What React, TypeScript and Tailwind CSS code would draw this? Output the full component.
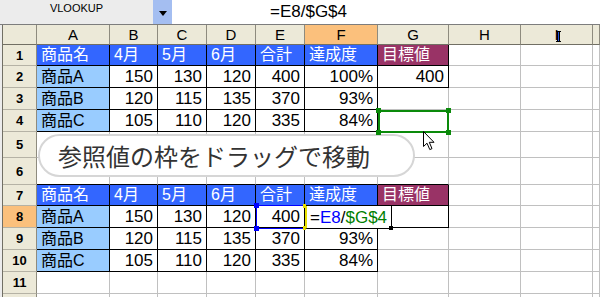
import React from "react";

const FONT = '"Liberation Sans", "Noto Sans CJK JP", sans-serif';

const letters = ["A", "B", "C", "D", "E", "F", "G", "H", "I", ""];

const headerRow = ["商品名", "4月", "5月", "6月", "合計", "達成度", "目標値"];
const data: Record<number, string[]> = {
  1: headerRow,
  2: ["商品A", "150", "130", "120", "400", "100%", "400"],
  3: ["商品B", "120", "115", "135", "370", "93%", ""],
  4: ["商品C", "105", "110", "120", "335", "84%", ""],
  7: headerRow,
  8: ["商品A", "150", "130", "120", "400", "", ""],
  9: ["商品B", "120", "115", "135", "370", "93%", ""],
  10: ["商品C", "105", "110", "120", "335", "84%", ""],
};

function inTable(r: number, c: number) {
  const tr = (r >= 1 && r <= 4) || (r >= 7 && r <= 10);
  if (tr && c >= 1 && c <= 6) return true;
  if ((r === 1 || r === 2 || r === 7 || r === 8) && c === 7) return true;
  return false;
}

function Cell({ r, c }: { r: number; c: number }) {
  const rightBlack = inTable(r, c) || inTable(r, c + 1);
  const bottomBlack = inTable(r, c) || inTable(r + 1, c);
  const row = data[r];
  const text = row && c >= 1 && c <= 7 ? row[c - 1] : "";
  const isHead = r === 1 || r === 7;
  let bg = "bg-white";
  let color = "text-black";
  let align = "justify-end pr-[4px]";
  let size = "text-[17px]";
  if (row) {
    if (isHead && c >= 1 && c <= 6) {
      bg = "bg-[#3366ff]";
      color = "text-white";
      align = "justify-start pl-[4px]";
      size = "text-[16px]";
    } else if (isHead && c === 7) {
      bg = "bg-[#993366]";
      color = "text-white";
      align = "justify-start pl-[4px]";
      size = "text-[16px]";
    } else if (c === 1) {
      bg = "bg-[#99ccff]";
      align = "justify-start pl-[4px]";
      size = "text-[16px]";
    }
  }
  return (
    <div
      className={`flex items-center overflow-hidden whitespace-nowrap leading-none border-r border-b ${
        rightBlack ? "border-r-black" : "border-r-[#c0c0c0]"
      } ${bottomBlack ? "border-b-black" : "border-b-[#c0c0c0]"} ${bg} ${color} ${align} ${size}`}
    >
      {text}
    </div>
  );
}

function Cursor() {
  return (
    <svg width="14" height="20" viewBox="0 0 14 20" className="absolute left-[423px] top-[131px]">
      <path d="M0.5 0.5 L0.5 15.5 L4 12.2 L6.8 18.6 L9 17.6 L6.3 11.3 L11 11.3 Z" fill="white" stroke="black" strokeWidth="1" strokeLinejoin="round" />
    </svg>
  );
}

export default function App() {
  const rows = [1, 2, 3, 4, 5, 6, 7, 8, 9, 10, 11, 12];
  return (
    <div className="relative w-[600px] h-[297px] overflow-hidden bg-white" style={{ fontFamily: FONT }}>
      {/* formula bar */}
      <div className="flex h-[25px] border-b border-b-[#7d7d7d]">
        <div className="w-[153px] bg-[#ececec] flex justify-center pt-[3px] text-[11px] leading-none text-black">VLOOKUP</div>
        <div className="w-[19px] bg-[#a4bef1] flex items-center justify-center">
          <svg width="8" height="5" viewBox="0 0 8 5" className="mt-[2px]">
            <path d="M0 0 L8 0 L4 5 Z" fill="black" />
          </svg>
        </div>
        <div className="flex-1 bg-white pl-[98px] pt-[2px] text-[17px] leading-[20px] text-black">=E8/$G$4</div>
      </div>

      {/* sheet */}
      <div className="bg-[#ececec] pl-[2px]">
        <div className="grid border-l border-l-[#716f64] grid-cols-[34px_73px_48px_49px_49px_49px_73px_71px_72px_72px_7px] grid-rows-[20px_21px_22px_22px_22px_26px_27px_21px_22px_22px_22px_22px_10px]">
          {/* header row */}
          <div className="bg-[#ece9d8] border-r border-b border-r-[#8e8b7e] border-b-[#716f64]" />
          {letters.map((l, i) => (
            <div
              key={"h" + i}
              className={`flex items-center justify-center text-[15px] leading-none text-black border-r border-b border-r-[#8e8b7e] border-b-[#716f64] ${
                i === 5 ? "bg-[#fbc07c]" : "bg-[#ece9d8]"
              }`}
            >
              {l}
            </div>
          ))}
          {rows.map((r) => (
            <React.Fragment key={r}>
              <div
                className={`flex items-center justify-center text-[13px] font-bold leading-none text-black border-r border-b border-r-[#8e8b7e] border-b-[#b5b2a5] ${
                  r === 8 ? "bg-[#fbc07c]" : "bg-[#ece9d8]"
                }`}
              >
                {r <= 11 ? r : ""}
              </div>
              {letters.map((_, i) => (
                <Cell key={r + "-" + i} r={r} c={i + 1} />
              ))}
            </React.Fragment>
          ))}
        </div>
      </div>

      {/* bubble */}
      <div className="absolute left-[38px] top-[134px] w-[377px] h-[43px] rounded-full border-2 border-[#d6d6d6] bg-white flex items-center pl-[18px] text-[24px] leading-none text-[#333333]" style={{ fontFamily: '"Noto Sans CJK JP", sans-serif' }}>
        参照値の枠をドラッグで移動
      </div>

      {/* green selection on G4 */}
      <div className="absolute left-[378px] top-[110px] w-[71px] h-[23px] border-2 border-[#0a8a0a]" />
      <div className="absolute left-[376px] top-[108px] w-[5px] h-[5px] bg-[#0a8a0a]" />
      <div className="absolute left-[446px] top-[108px] w-[5px] h-[5px] bg-[#0a8a0a]" />
      <div className="absolute left-[376px] top-[130px] w-[5px] h-[5px] bg-[#0a8a0a]" />
      <div className="absolute left-[446px] top-[130px] w-[5px] h-[5px] bg-[#0a8a0a]" />

      {/* E8 blue reference frame */}
      <div className="absolute left-[256px] top-[205px] w-[50px] h-[24px] border border-[#0000ff]" />
      <div className="absolute left-[254px] top-[203px] w-[5px] h-[5px] bg-[#0000ff]" />
      <div className="absolute left-[254px] top-[226px] w-[5px] h-[5px] bg-[#0000ff]" />
      <div className="absolute left-[303px] top-[204px] w-[3px] h-[4px] bg-[#e8e000]" />
      <div className="absolute left-[303px] top-[226px] w-[3px] h-[4px] bg-[#e8e000]" />

      {/* F8 edit box */}
      <div className="absolute left-[305px] top-[206px] w-[87px] h-[23px] bg-white border-l-2 border-l-[#e8e000] border-r border-b border-r-black border-b-black flex items-center pl-[3px] text-[17px] leading-none whitespace-nowrap">
        <span className="text-black">=</span>
        <span className="text-[#0000ff]">E8</span>
        <span className="text-black">/</span>
        <span className="text-[#008000]">$G$4</span>
      </div>
      <div className="absolute left-[389px] top-[226px] w-[4px] h-[4px] bg-black" />

      {/* I-beam cursor in column I header */}
      <div className="absolute left-[556px] top-[31px] w-[5px] h-[11px] flex flex-col items-center">
        <div className="w-[5px] h-[1px] bg-black" />
        <div className="w-[3px] h-[9px] bg-[#2255dd] border-x border-black" />
        <div className="w-[5px] h-[1px] bg-black" />
      </div>

      <Cursor />
    </div>
  );
}
